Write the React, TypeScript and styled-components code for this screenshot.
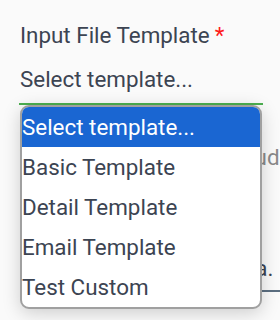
import React, { useState } from 'react'
import styled, { createGlobalStyle } from 'styled-components'

const GlobalStyle = createGlobalStyle`
  html, body {
    margin: 0;
    padding: 0;
    background: #fafafa;
    font-family: Roboto, 'Liberation Sans', sans-serif;
  }
`

const Page = styled.div`
  width: 280px;
  height: 320px;
  overflow: hidden;
  padding: 20px 0 0 20px;
  box-sizing: border-box;
  position: relative;
`

const Field = styled.div`
  position: relative;
`

const Label = styled.div`
  font-size: 22.4px;
  color: #3c4452;
  line-height: 30px;
`

const Required = styled.span`
  color: #ff1a1a;
  margin-left: 5px;
`

const SelectBox = styled.div`
  margin-top: 14px;
  font-size: 22.4px;
  line-height: 30px;
  color: #3c4452;
  padding-bottom: 9px;
  width: 243px;
  margin-left: -1px;
  padding-left: 1px;
  border-bottom: 2px solid #4caf50;
`

const Listbox = styled.ul`
  position: absolute;
  top: 105px;
  left: 20px;
  width: 242px;
  margin: 0;
  padding: 0;
  list-style: none;
  background: #fff;
  border: 2px solid #a0a0a0;
  border-radius: 9px;
  overflow: hidden;
  box-sizing: border-box;
  box-shadow: 0 4px 18px rgba(0, 0, 0, 0.18);
  z-index: 2;
`

const Option = styled.li<{ $active?: boolean }>`
  height: 40px;
  line-height: 40px;
  font-size: 22.4px;
  color: ${p => (p.$active ? '#fff' : '#3c4452')};
  background: ${p => (p.$active ? '#1a66d2' : 'transparent')};
`

const BehindText = styled.div<{ $muted?: boolean }>`
  font-size: 22.4px;
  line-height: 30px;
  white-space: nowrap;
  color: ${p => (p.$muted ? '#8a8a8a' : '#3c4452')};
`

const NotesField = styled.div`
  margin-top: 37px;
`

const DataField = styled.div`
  margin-top: 81px;
  padding-bottom: 7px;
  border-bottom: 2px solid #5b6e80;
`

const options = ['Select template...', 'Basic Template', 'Detail Template', 'Email Template', 'Test Custom']

export default function App() {
  const [active] = useState(0)

  return (
    <>
      <GlobalStyle />
      <Page>
        <Field>
          <Label>
            Input File Template<Required>*</Required>
          </Label>
          <SelectBox>Select template...</SelectBox>
          <NotesField>
            <BehindText $muted>Templates can also include</BehindText>
          </NotesField>
          <DataField>
            <BehindText>Upload your sample data.</BehindText>
          </DataField>
        </Field>
        <Listbox role="listbox">
          {options.map((o, i) => (
            <Option key={o} $active={i === active}>
              {o}
            </Option>
          ))}
        </Listbox>
      </Page>
    </>
  )
}
